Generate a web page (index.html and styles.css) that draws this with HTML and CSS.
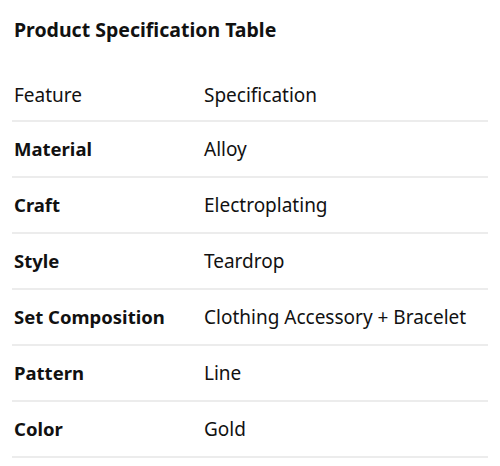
FILE: index.html
```html
<!DOCTYPE html>
<html>
<head>
<meta charset="utf-8">
<link rel="stylesheet" href="styles.css">
</head>
<body>
<div class="wrap">
  <h2 class="title">Product Specification Table</h2>
  <table class="spec">
    <tr class="head"><td class="k">Feature</td><td class="v">Specification</td></tr>
    <tr><td class="k b">Material</td><td class="v">Alloy</td></tr>
    <tr><td class="k b">Craft</td><td class="v">Electroplating</td></tr>
    <tr><td class="k b">Style</td><td class="v">Teardrop</td></tr>
    <tr><td class="k b">Set Composition</td><td class="v">Clothing Accessory + Bracelet</td></tr>
    <tr><td class="k b">Pattern</td><td class="v">Line</td></tr>
    <tr><td class="k b">Color</td><td class="v">Gold</td></tr>
  </table>
</div>
</body>
</html>
```
FILE: styles.css
```css
html, body { margin: 0; padding: 0; background: #fff; }
body { font-family: "Noto Sans", "Open Sans", sans-serif; color: #111; }
.wrap { padding: 0 12px; }
.title { margin: 0; padding-top: 17px; height: 47px; box-sizing: border-box; font-size: 19.5px; font-weight: 700; line-height: 26px; padding-left: 2px; }
.spec { width: 476px; border-collapse: collapse; }
.spec td { height: 54px; border-bottom: 2px solid #ececec; padding: 0 0 0 2px; font-size: 19px; line-height: 26px; vertical-align: middle; }
.spec .head td { height: 74px; padding-top: 22px; box-sizing: border-box; }
.k { width: 188px; }
.b { font-weight: 700; font-size: 18.5px !important; }
```
